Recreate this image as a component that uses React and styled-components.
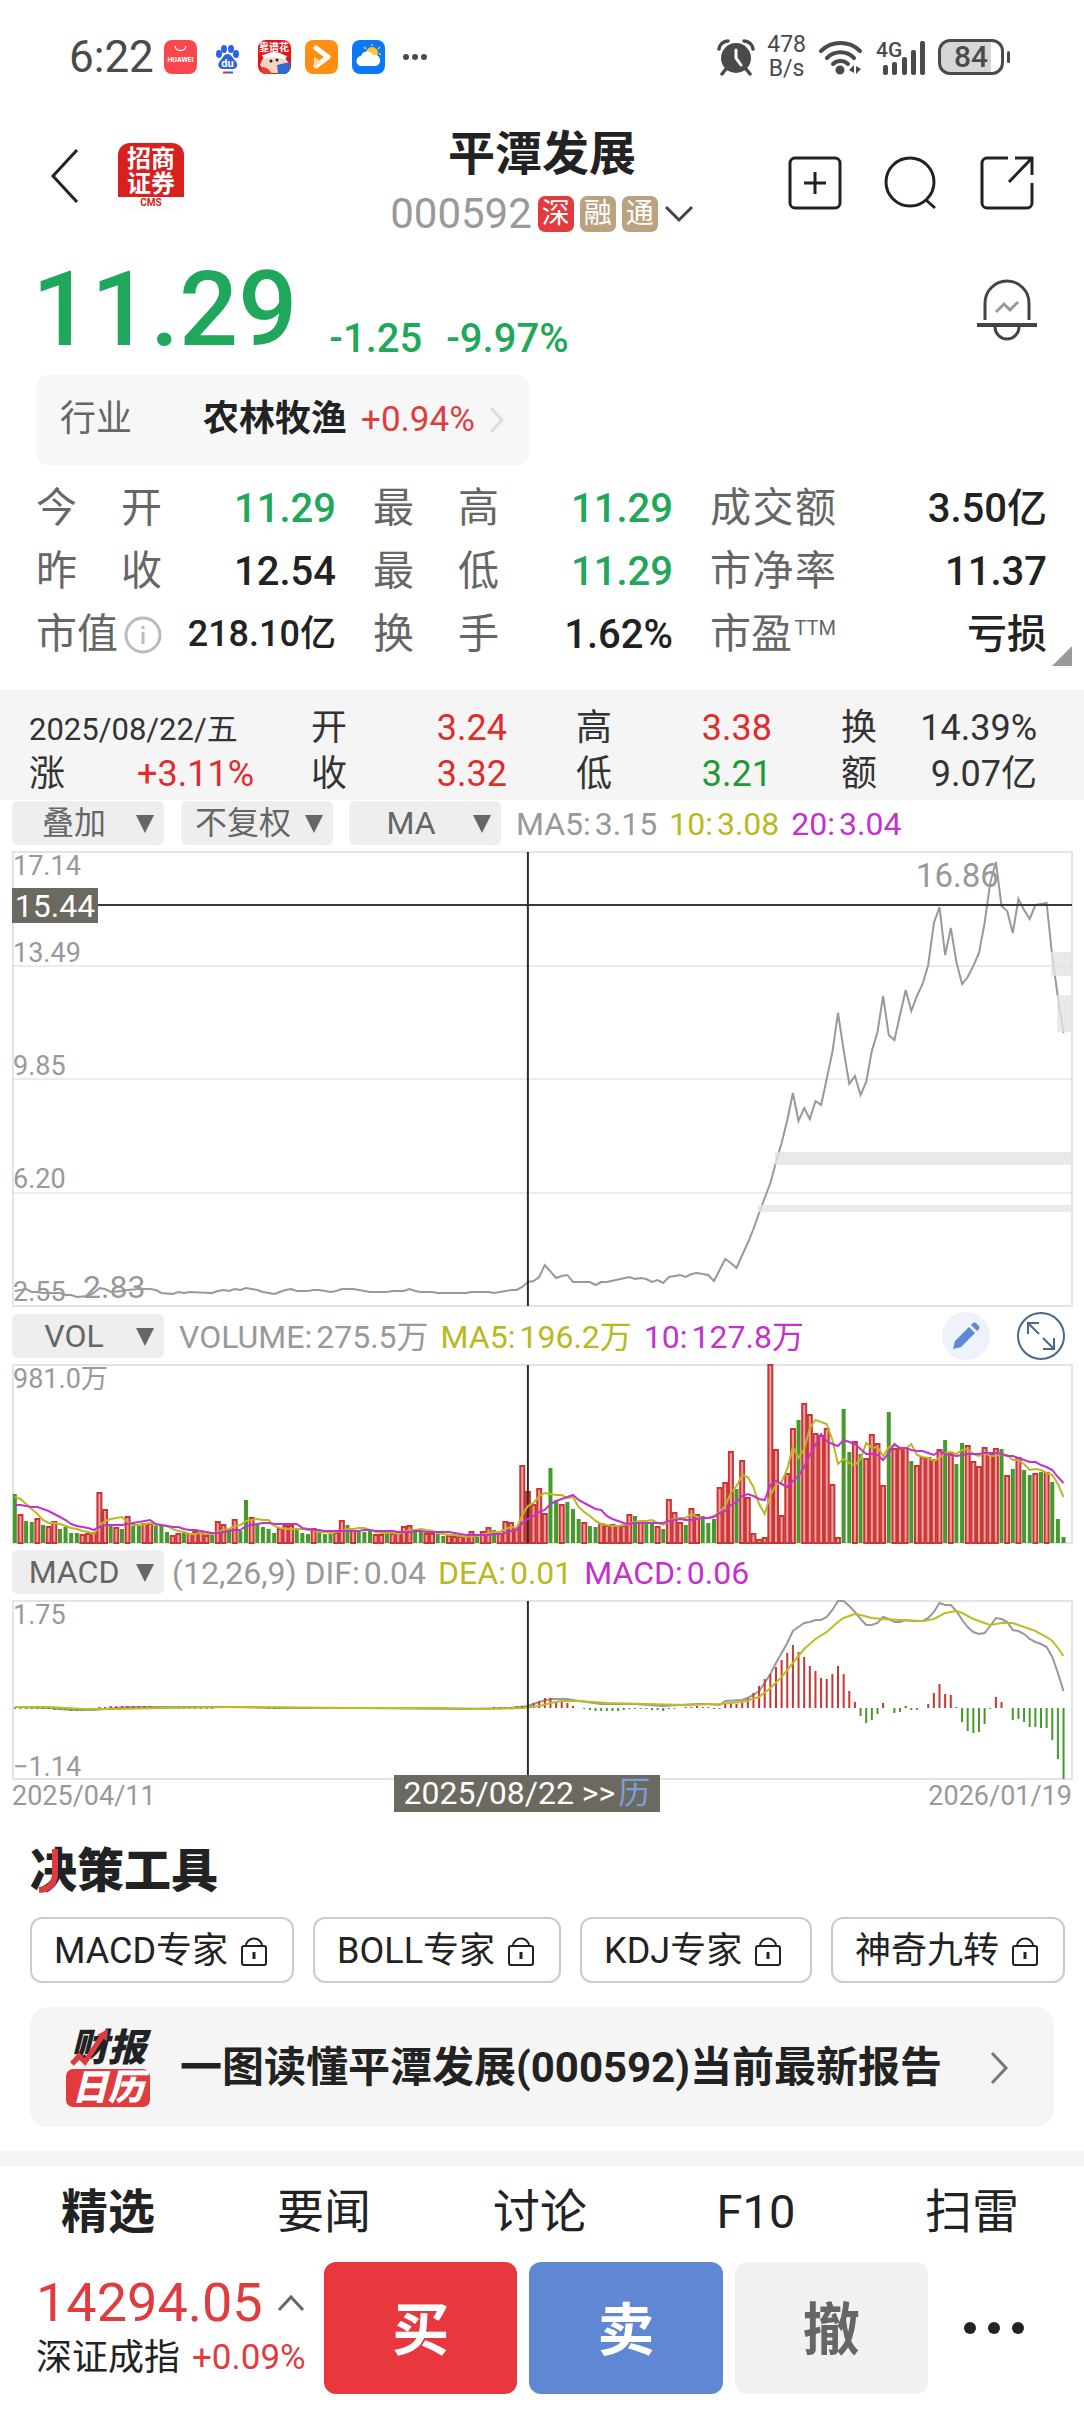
import React from 'react';
import styled, { createGlobalStyle } from 'styled-components';

const GlobalStyle = createGlobalStyle`
  * { box-sizing: border-box; }
  body {
    margin: 0;
    background: #fff;
    color: #222;
    font-family: Roboto, "Noto Sans CJK SC", sans-serif;
    line-height: 1.2;
    overflow-x: hidden;
  }
  button, select {
    font-family: inherit;
    line-height: inherit;
    border: 0;
    padding: 0;
    margin: 0;
    background: none;
    color: inherit;
  }
  a { color: inherit; text-decoration: none; }
  svg { display: block; flex: none; }
  h1, h2, dl, dt, dd, p { margin: 0; font-weight: normal; }
`;

const colors = {
  up: '#e03c40',
  down: '#1fa85b',
  text: '#222',
  label: '#666',
  muted: '#999',
  yellow: '#b9b91e',
  purple: '#c432cc',
  barRed: '#c93636',
  barGreen: '#459a2c',
};

/* ---------- data ---------- */

const quotes = [
  { label: '今开', value: '11.29', color: colors.down },
  { label: '最高', value: '11.29', color: colors.down },
  { label: '成交额', value: '3.50亿' },
  { label: '昨收', value: '12.54' },
  { label: '最低', value: '11.29', color: colors.down },
  { label: '市净率', value: '11.37' },
  { label: '市值', value: '218.10亿', info: true, small: true },
  { label: '换手', value: '1.62%' },
  { label: '市盈', value: '亏损', sup: 'TTM' },
];

const dayRows = [
  [
    ['2025/08/22/五', ''],
    ['开', '3.24', '#e02c2c'],
    ['高', '3.38', '#e02c2c'],
    ['换', '14.39%', '#333'],
  ],
  [
    ['涨', '+3.11%', '#e02c2c'],
    ['收', '3.32', '#e02c2c'],
    ['低', '3.21', '#1f9a30'],
    ['额', '9.07亿', '#333'],
  ],
];

// [bar index, y] for every turning point of the price line
const pricePoints = [
  [0, 439], [2, 437], [3, 440], [4, 440], [5, 441], [8, 441], [9, 443], [10, 443], [11, 445], [13, 444], [14, 441],
  [15, 436], [16, 437], [17, 440], [19, 439], [20, 438], [22, 437], [24, 437], [25, 438], [26, 441], [28, 442],
  [29, 440], [30, 441], [31, 440], [35, 441], [36, 439], [37, 438], [38, 439], [39, 437], [40, 438], [41, 436],
  [42, 437], [43, 438], [44, 440], [46, 442], [47, 440], [48, 438], [49, 437], [50, 439], [52, 439], [53, 438],
  [54, 438], [56, 440], [57, 439], [58, 437], [60, 437], [62, 439], [63, 440], [66, 440], [67, 439], [69, 439],
  [70, 437], [71, 439], [72, 440], [74, 440], [75, 441], [80, 441], [81, 440], [84, 440], [85, 441], [86, 440],
  [88, 438], [89, 438], [90, 435], [91, 430], [92, 429], [93, 425], [94, 413], [96, 426], [97, 424], [98, 423],
  [99, 430], [102, 430], [103, 433], [104, 430], [105, 430], [109, 425], [110, 427], [111, 426], [112, 427],
  [113, 430], [114, 428], [115, 431], [116, 425], [118, 423], [119, 425], [120, 422], [121, 421], [123, 423],
  [124, 429], [125, 418], [126, 407], [127, 411], [128, 416], [129, 403], [130, 391], [131, 377], [132, 361],
  [133, 346], [134, 331], [135, 310], [136, 291], [137, 268], [138, 241], [139, 269], [140, 256], [141, 267],
  [142, 249], [143, 253], [144, 227], [145, 200], [146, 161], [147, 198], [148, 232], [149, 224], [150, 243],
  [151, 230], [152, 199], [153, 180], [154, 144], [155, 183], [156, 188], [157, 163], [158, 138], [159, 159],
  [160, 144], [161, 132], [162, 113], [163, 71], [164, 55], [165, 103], [166, 76], [167, 110], [168, 132],
  [169, 125], [170, 114], [171, 101], [172, 71], [173, 31], [174, 10], [175, 54], [176, 59], [177, 81], [178, 47],
  [179, 58], [180, 67], [181, 53], [182, 52], [183, 51], [184, 105], [185, 145], [186, 181],
];

// volume bars, g = falling day, r = rising day
const volumes = `
g49 r28 g22 g21 r24 g18 r16 r21 g14 g16 g10 g10 r8 r9 r10 r50 r33 g17 r15 g14 r26 g17 g17 r19 r19 g17 g17 g11 r7 r9
g10 r9 r11 r10 r7 g8 r21 r18 g14 r23 g12 g43 r25 g19 g16 g14 g10 r14 r17 r17 g13 g10 g9 r14 g11 g9 g9 r10 r22 g18
r12 g11 g11 g13 r8 r8 g10 r9 r11 r16 r17 g13 g11 r9 r9 g9 g7 r7 r6 r6 r6 r11 g6 r11 r15 g13 r9 r21 r20 r14
r77 r51 r38 r54 r29 g75 g43 r38 g41 g34 g24 r20 g17 g16 r19 r17 r18 r17 r17 r28 g27 r21 g19 g19 r16 g14 r43 r30 r20 g18
r34 r28 g27 g20 g24 r55 r60 r91 g54 r82 r45 r9 r3 r5 r178 r93 r27 r69 r114 g123 r139 r128 r109 r107 r114 r58 r5 g134 g91 r101
g89 r84 r108 r99 r57 g131 r94 r94 r94 g82 r77 r85 r85 r83 r93 g103 r89 g79 g100 r97 r81 r76 r95 r88 r94 g94 r67 g74 r85 g73
g68 r69 g71 r70 g61 g24 g6
`.trim().split(/\s+/).map((s) => ({ rise: s[0] === 'r', h: Number(s.slice(1)) }));

const earlierVolumes = [28, 28, 30, 32, 32, 40, 45, 48, 48];

const macdBars = [
  -1, -1, -1, -1, -1, -1, -1, -2, -2, -2, -3, -3, -3, -2, -1, 1, 1, 2, 2, 2, 2, 2, 2, 2, 2, 1, -1, -1, -1, -1,
  -1, -1, -1, -1, -1, -1, 1, 1, 1, 2, 2, 2, 2, 1, 0, -1, -1, -1, 0, 0, 0, 0, 0, 0, 0, 0, 0, 0, 1, 1,
  1, 1, 1, 1, 0, -1, -1, -1, -1, -1, -1, -1, 0, 0, 0, 0, 0, 0, -1, -1, -1, 0, 0, 0, 0, 1, 1, 1, 1, 2,
  2, 3, 5, 7, 10, 10, 7, 6, 5, 2, 0, -1, -2, -3, -3, -3, -3, -3, -2, -1, -1, -1, -1, -2, -2, -3, -1, -1, 0, 1,
  1, 2, 1, 1, -1, -1, 4, 6, 4, 6, 10, 15, 22, 29, 34, 41, 48, 55, 63, 56, 51, 42, 37, 30, 29, 34, 42, 34, 17, 6,
  -8, -15, -12, -6, 5, 0, -5, -4, 2, -2, -2, 0, 4, 15, 24, 14, 13, 1, -14, -23, -25, -24, -16, -1, 11, 6, 0, -12,
  -11, -14, -19, -19, -20, -20, -32, -51, -71,
];

const difPoints = [
  [0, 106], [6, 107], [10, 109], [14, 109], [20, 106], [28, 106], [38, 106], [46, 107], [60, 107], [80, 108],
  [88, 107], [91, 105], [93, 101], [95, 98], [98, 98], [100, 100], [104, 103], [110, 103], [115, 105], [121, 103],
  [123, 103], [125, 104], [126, 100], [129, 99], [130, 97], [131, 94], [132, 90], [133, 82], [134, 73], [135, 62],
  [136, 52], [137, 42], [138, 30], [139, 26], [140, 22], [141, 21], [142, 19], [143, 19], [144, 16], [145, 9],
  [146, 0], [147, 0], [148, 5], [149, 11], [150, 18], [151, 24], [152, 24], [153, 22], [154, 16], [155, 18],
  [156, 21], [157, 21], [158, 19], [159, 20], [161, 20], [162, 17], [163, 11], [164, 2], [165, 4], [166, 4],
  [167, 10], [168, 19], [169, 26], [170, 31], [171, 33], [172, 32], [173, 25], [174, 17], [175, 18], [176, 21],
  [177, 29], [178, 30], [179, 33], [180, 38], [181, 41], [182, 43], [183, 46], [184, 56], [185, 72], [186, 90],
];

const deaPoints = [
  [0, 106], [6, 106], [12, 108], [18, 108], [26, 107], [40, 106], [60, 107], [75, 107], [84, 108], [90, 107],
  [93, 105], [95, 102], [97, 100], [100, 100], [105, 102], [112, 103], [119, 104], [125, 103], [129, 101],
  [132, 96], [134, 87], [136, 76], [138, 62], [140, 48], [142, 38], [144, 31], [146, 21], [147, 17], [148, 15],
  [149, 13], [150, 14], [152, 17], [154, 18], [157, 19], [161, 20], [163, 18], [165, 12], [167, 10], [168, 12],
  [170, 18], [172, 22], [173, 24], [175, 22], [177, 22], [179, 26], [181, 30], [183, 36], [184, 40], [185, 47],
  [186, 55],
];

const CHART_W = 1060;
const STEP = CHART_W / 188;
const CURSOR = 91;
const barX = (i) => STEP * (i + 0.5);
const toPoints = (list) => list.map(([i, y]) => `${barX(i).toFixed(1)},${y}`).join(' ');

const average = (n) => {
  const all = [...earlierVolumes, ...volumes.map((v) => v.h)];
  return volumes.map((v, i) => {
    const end = i + earlierVolumes.length + 1;
    const sum = all.slice(end - n, end).reduce((a, b) => a + b, 0);
    return [i, Math.round(178 - sum / n)];
  });
};

/* ---------- status bar ---------- */

const StatusBar = styled.div`
  display: flex;
  align-items: center;
  justify-content: space-between;
  height: 112px;
  padding: 2px 74px 0 69px;
  color: #4a4a4a;
`;

const StatusGroup = styled.div`
  display: flex;
  align-items: center;
  gap: ${(p) => p.$gap}px;
`;

const Clock = styled.span`
  font-size: 44px;
  line-height: 48px;
  margin-right: -4px;
`;

const NetSpeed = styled.span`
  font-size: 23px;
  line-height: 24px;
  text-align: center;
`;

const Battery = styled.span`
  display: flex;
  align-items: center;
  gap: 3px;
  &::after {
    content: '';
    width: 3px;
    height: 12px;
    border-radius: 2px;
    background: #4a4a4a;
  }
`;

const BatteryBody = styled.span`
  width: 66px;
  height: 36px;
  border: 3px solid #4a4a4a;
  border-radius: 12px;
  background: linear-gradient(90deg, #d6d6d6 84%, #fff 84%);
  font-size: 30px;
  font-weight: 500;
  line-height: 30px;
  text-align: center;
`;

/* ---------- header ---------- */

const Header = styled.header`
  display: grid;
  grid-template-columns: 1fr auto 1fr;
  align-items: center;
  padding: 12px 50px 0;
  height: 132px;
`;

const HeaderSide = styled.div`
  display: flex;
  align-items: center;
  justify-content: ${(p) => (p.$end ? 'flex-end' : 'flex-start')};
  gap: ${(p) => (p.$end ? 42 : 38)}px;
  padding-bottom: ${(p) => (p.$end ? 2 : 16)}px;
`;

const Broker = styled.a`
  width: 66px;
  height: 66px;
  border-radius: 12px;
  overflow: hidden;
  background: linear-gradient(#d8201f 54px, #fff 54px);
  box-shadow: 0 0 2px #ddd;
  color: #fff;
  font-weight: 700;
  font-size: 24px;
  line-height: 25px;
  text-align: center;
  padding-top: 4px;
`;

const BrokerCode = styled.span`
  display: block;
  color: #d8201f;
  font-size: 10px;
  line-height: 12px;
`;

const TitleBox = styled.div`
  display: flex;
  flex-direction: column;
  align-items: center;
`;

const StockName = styled.h1`
  font-size: 47px;
  line-height: 60px;
  font-weight: 700;
`;

const StockCode = styled.button`
  display: flex;
  align-items: center;
  gap: 6px;
  font-size: 42px;
  line-height: 60px;
  color: ${colors.muted};
`;

const Badge = styled.span`
  width: 36px;
  height: 36px;
  border-radius: 7px;
  background: ${(p) => p.$bg};
  color: #fff;
  font-size: 28px;
  line-height: 36px;
  text-align: center;
`;

const IconButton = styled.button`
  display: flex;
`;

/* ---------- price ---------- */

const PriceRow = styled.section`
  display: flex;
  align-items: center;
  justify-content: space-between;
  height: 131px;
  padding: 0 46px 0 32px;
`;

const PriceGroup = styled.div`
  display: flex;
  align-items: flex-end;
  gap: 24px;
  color: ${colors.down};
  font-size: 40px;
  line-height: 56px;
  font-weight: 500;
`;

const Price = styled.strong`
  font-size: 104px;
  line-height: 114px;
  font-weight: 500;
  margin-right: 8px;
`;

const Industry = styled.a`
  display: inline-flex;
  align-items: center;
  height: 90px;
  margin-left: 36px;
  padding: 0 24px;
  border-radius: 12px;
  background: #f7f7f7;
  font-size: 36px;
  color: ${colors.label};
  b { margin: 0 14px 0 71px; color: #222; font-weight: 700; }
  span { margin-right: 14px; color: ${colors.up}; font-size: 35px; }
`;

const Quotes = styled.dl`
  position: relative;
  display: grid;
  grid-template-columns: 300fr 300fr 337fr;
  column-gap: 37px;
  padding: 12px 37px 24px 36px;
`;

const Quote = styled.div`
  display: flex;
  align-items: center;
  justify-content: space-between;
  height: 63px;
  dt {
    display: flex;
    justify-content: space-between;
    align-items: center;
    width: 126px;
    font-size: 41px;
    color: ${colors.label};
  }
  dd {
    color: ${(p) => p.$color || colors.text};
    font-size: ${(p) => (p.$small ? 36 : 40)}px;
    font-weight: 500;
    white-space: nowrap;
  }
  sup { font-size: 20px; align-self: flex-start; line-height: 36px; vertical-align: top; }
`;

const Corner = styled.span`
  position: absolute;
  right: 12px;
  bottom: 24px;
  border: 10px solid;
  border-color: transparent #999 #999 transparent;
`;

const DayInfo = styled.section`
  border-top: 16px solid #f2f4f6;
  background: #f5f5f5;
  padding: 0 47px 2px 29px;
  color: #333;
`;

const DayRow = styled.div`
  display: grid;
  grid-template-columns: 282fr 265fr 265fr 196fr;
  height: 46px;
  align-items: baseline;
  line-height: 44px;
`;

const DayCell = styled.div`
  display: flex;
  justify-content: space-between;
  align-items: baseline;
  white-space: nowrap;
  padding-right: 69px;
  font-size: ${(p) => (p.$date ? 31 : 36)}px;
  &:first-child { padding-right: 57px; }
  &:last-child { padding-right: 0; }
  b { font-weight: 400; color: ${(p) => p.$color}; }
`;

/* ---------- charts ---------- */

const Charts = styled.section`
  padding: 0 12px;
`;

const Toolbar = styled.div`
  display: flex;
  align-items: center;
  padding: ${(p) => p.$top}px 0 6px;
`;

const SelectBox = styled.label`
  position: relative;
  width: 152px;
  height: 44px;
  margin-right: ${(p) => p.$gap}px;
  color: ${colors.label};
  &::after {
    content: '';
    position: absolute;
    right: 10px;
    top: 14px;
    border: 9px solid transparent;
    border-top: 18px solid #666;
    border-bottom: 0;
    pointer-events: none;
  }
  select {
    appearance: none;
    width: 100%;
    height: 100%;
    padding-right: 28px;
    border-radius: 6px;
    background: #eee;
    font-size: 32px;
    text-align-last: center;
  }
`;

const LegendItem = styled.span`
  display: flex;
  gap: 4px;
  color: ${(p) => p.$color};
  font-size: 32px;
  line-height: 46px;
  margin-right: 12px;
  height: 44px;
  white-space: nowrap;
`;

const Tools = styled.div`
  display: flex;
  gap: 27px;
  height: 44px;
  align-items: center;
  margin: 0 7px 0 auto;
`;

const RoundButton = styled.button`
  display: flex;
  align-items: center;
  justify-content: center;
  width: 48px;
  height: 48px;
  border-radius: 50%;
  background: ${(p) => (p.$outlined ? '#fff' : '#edf2fb')};
  border: ${(p) => (p.$outlined ? '2px solid #46698c' : '0')};
`;

const Plot = styled.svg`
  width: 100%;
  height: auto;
  overflow: visible;
`;

const Axis = styled.div`
  position: relative;
  display: flex;
  justify-content: space-between;
  height: 34px;
  color: ${colors.muted};
  font-size: 27px;
  line-height: 32px;
`;

const CursorDate = styled.button`
  position: absolute;
  left: 36%;
  top: -5px;
  height: 37px;
  padding: 0 10px;
  background: #6b6960;
  color: #fff;
  font-size: 32px;
  line-height: 37px;
  white-space: nowrap;
  span { color: #7a9fd8; margin-left: 3px; }
`;

/* ---------- tools ---------- */

const Heading = styled.h2`
  position: relative;
  margin: 26px 30px 0;
  font-size: 47px;
  line-height: 62px;
  font-weight: 900;
  svg { position: absolute; left: 0; top: 7px; }
`;

const Chips = styled.div`
  display: flex;
  gap: 19px;
  padding: 15px 0 24px 30px;
  overflow: hidden;
`;

const Chip = styled.button`
  flex: none;
  display: flex;
  align-items: center;
  gap: 12px;
  min-width: 232px;
  height: 66px;
  padding: 3px 24px 0 22px;
  border: 2px solid #ccc;
  border-radius: 12px;
  font-size: 36px;
`;

const Report = styled.a`
  display: flex;
  align-items: center;
  height: 120px;
  margin: 0 30px 24px;
  padding: 2px 44px 0 36px;
  border-radius: 18px;
  background: #f5f5f5;
  font-size: 42px;
  font-weight: 700;
  white-space: nowrap;
  p { flex: 1; margin-left: 30px; font-weight: 700; }
`;

const ReportLogo = styled.span`
  position: relative;
  display: flex;
  flex-direction: column;
  gap: 3px;
  width: 84px;
  font-size: 38px;
  font-style: italic;
  font-weight: 900;
  line-height: 36px;
  text-align: center;
  svg { position: absolute; left: 3px; top: -1px; }
`;

const ReportBadge = styled.span`
  border-radius: 7px;
  background: ${colors.up};
  color: #fff;
  font-size: 36px;
  line-height: 38px;
`;

const Tabs = styled.nav`
  display: flex;
  height: 105px;
  padding: 2px 4px 0 0;
  border-top: 15px solid #f2f4f6;
`;

const Tab = styled.button`
  flex: 1;
  font-size: 47px;
  font-weight: ${(p) => (p.$active ? 700 : 400)};
`;

const Footer = styled.footer`
  display: flex;
  align-items: center;
  gap: 12px;
  padding: 6px 0 18px 36px;
`;

const Index = styled.a`
  width: 276px;
  color: ${colors.up};
`;

const IndexLine = styled.div`
  display: flex;
  align-items: center;
  gap: ${(p) => (p.$big ? 14 : 12)}px;
  line-height: ${(p) => (p.$big ? 60 : 50)}px;
  font-size: ${(p) => (p.$big ? 54 : 35)}px;
  white-space: nowrap;
  b { color: #222; font-weight: 400; font-size: 36px; }
`;

const Trade = styled.button`
  flex: 1;
  height: 132px;
  padding-top: 6px;
  border-radius: 12px;
  background: ${(p) => p.$bg};
  color: ${(p) => p.$color || '#fff'};
  font-size: 57px;
  font-weight: 700;
`;

const More = styled.button`
  display: flex;
  justify-content: center;
  gap: 12px;
  width: 144px;
  padding-right: 36px;
  i {
    width: 12px;
    height: 12px;
    border-radius: 50%;
    background: #222;
  }
`;

const Chevron = ({ w, h, d, color, stroke = 3 }) => (
  <svg width={w} height={h} viewBox={`0 0 ${w} ${h}`} fill="none" stroke={color} strokeWidth={stroke}>
    <path d={d} />
  </svg>
);

const Lock = () => (
  <svg width="28" height="32" viewBox="0 0 28 32" fill="none" stroke="#222" strokeWidth="2">
    <rect x="2" y="10" width="24" height="19" rx="2" />
    <path d="M6 10a8 7.500 0 0 1 16 0" />
    <path d="M14 16v7" strokeWidth="3" />
  </svg>
);

const AppIcons = () => (
  <>
    <svg width="33" height="34" viewBox="0 0 33 34">
      <rect width="33" height="34" rx="8" fill="#f9484d" />
      <path d="M11 6c1 6 10 6 11 0" fill="none" stroke="#fff" strokeWidth="1.300" />
      <text x="16.500" y="22" fontSize="7" fontWeight="700" fill="#fff" textAnchor="middle">HUAWEI</text>
    </svg>
    <svg width="33" height="34" viewBox="0 0 33 34" fill="#2d62e8">
      <ellipse cx="8" cy="14" rx="3" ry="4" />
      <ellipse cx="13" cy="9" rx="3" ry="4" />
      <ellipse cx="20" cy="9" rx="3" ry="4" />
      <ellipse cx="25" cy="14" rx="3" ry="4" />
      <path d="M16.500 14c4 0 5 4 8 7s2 8-3 8H12c-5 0-6-5-3-8s3.500-7 7.500-7z" />
      <text x="16.500" y="27" fontSize="11" fontWeight="700" fill="#fff" textAnchor="middle">du</text>
      <path d="M12 31.500h5v2h-5z" fill="#d33" />
      <path d="M17 31.500h5v2h-5z" />
    </svg>
    <svg width="33" height="34" viewBox="0 0 33 34">
      <rect width="33" height="34" rx="8" fill="#e5141b" />
      <path d="M2 25c3-9 8-12 14-11s12 3 15 10l-6 9H8z" fill="#f7d3c2" />
      <path d="M4 15c4 0 6-3 12-3s9 3 13 4l-2 4c-6-3-14-4-21-1z" fill="#fff" />
      <circle cx="13" cy="21" r="1.500" fill="#222" />
      <circle cx="19" cy="20" r="1.500" fill="#222" />
      <path d="M3 27c4 0 8 1 11 7H8c-3 0-5-2-5-7z" fill="#ee3a2e" />
      <path d="M19 25l13-3v8l-4 4h-8z" fill="#2e6bd0" />
      <text x="16" y="11" fontSize="10" fontWeight="700" fill="#fff" textAnchor="middle">靠谱花</text>
    </svg>
    <svg width="33" height="34" viewBox="0 0 33 34">
      <rect width="33" height="34" rx="8" fill="#ff8f12" />
      <path d="M11 8l12 9-12 9" fill="none" stroke="#fff" strokeWidth="5" strokeLinecap="round" strokeLinejoin="round" />
      <path d="M9 17v10l8-5z" fill="#ffd9a3" />
    </svg>
    <svg width="33" height="34" viewBox="0 0 33 34">
      <rect width="33" height="34" rx="8" fill="#0d78f5" />
      <circle cx="20" cy="13" r="6" fill="#fdc52c" />
      <path d="M20 4v2M12 7l2 2M28 7l-2 2M27 14h2" stroke="#fdc52c" strokeWidth="1.500" />
      <path d="M10 26a5 5 0 0 1-1-10 6.500 6.500 0 0 1 12-1 5.500 5.500 0 0 1 3 11z" fill="#fff" />
    </svg>
  </>
);

const Alarm = () => (
  <svg width="38" height="38" viewBox="0 0 38 38" fill="#4a4a4a">
    <circle cx="19" cy="20" r="15" />
    <path d="M2 11a9 9 0 0 1 9-8M36 11a9 9 0 0 0-9-8M9 31l-4 5M29 31l4 5" fill="none" stroke="#4a4a4a" strokeWidth="3.500" strokeLinecap="round" />
    <path d="M19 12v8l5 7" fill="none" stroke="#fff" strokeWidth="3" strokeLinecap="round" />
  </svg>
);

const Wifi = () => (
  <svg width="46" height="36" viewBox="0 0 46 36" fill="none" stroke="#4a4a4a" strokeWidth="4" strokeLinecap="round">
    <path d="M3 12a28 28 0 0 1 39 0M9 19a19 19 0 0 1 27 0M15 25a11 11 0 0 1 15 0" />
    <circle cx="22" cy="31" r="2.500" fill="#4a4a4a" />
    <path d="M36 26v8l-5-3zM38 35v-8l5 3z" fill="#4a4a4a" stroke="none" />
  </svg>
);

const Signal = () => (
  <svg width="50" height="46" viewBox="0 -5 50 46" fill="#4a4a4a">
    <text x="0" y="18" fontSize="21" fontWeight="500">4G</text>
    <rect x="7" y="26" width="5" height="10" rx="2" />
    <rect x="16" y="23" width="5" height="13" rx="2" />
    <rect x="26" y="18" width="5" height="18" rx="2" />
    <rect x="35" y="11" width="5" height="25" rx="2" />
    <rect x="44" y="2" width="5" height="34" rx="2" />
  </svg>
);

const Frame = ({ h, lines = [] }) => (
  <g fill="none" stroke="#e4e4e4" strokeWidth="2">
    <rect x="1" y="0" width={CHART_W - 1} height={h} />
    {lines.map((y) => (
      <path key={y} d={`M0 ${y}H${CHART_W}`} stroke="#d8d8d8" strokeWidth="1" />
    ))}
  </g>
);

const CursorLine = ({ h }) => <path d={`M${barX(CURSOR).toFixed(1)} 0V${h}`} stroke="#2b2b2b" strokeWidth="2" />;

const PriceChart = () => (
  <Plot viewBox="0 -1 1060 456" role="img" aria-label="价格走势">
    <Frame h={454} lines={[114, 227, 341]} />
    <g fill="#999" fontSize="27">
      <text x="1" y="23">17.14</text>
      <text x="1" y="110">13.49</text>
      <text x="1" y="223">9.85</text>
      <text x="1" y="336">6.20</text>
      <text x="1" y="449">2.55</text>
      <text x="71" y="446" fontSize="32">2.83</text>
      <text x="904" y="35" fontSize="33">16.86</text>
    </g>
    <polyline points={toPoints(pricePoints)} fill="none" stroke="#999" strokeWidth="2" />
    <g fill="#e3e3e3" fillOpacity="0.8">
      <rect x="1039" y="100" width="20" height="24" />
      <rect x="1045" y="143" width="14" height="37" />
      <rect x="763" y="300" width="296" height="13" />
      <rect x="746" y="353" width="313" height="7" />
    </g>
    <path d="M86 53H1060" stroke="#3a3a3a" strokeWidth="2" />
    <CursorLine h={454} />
    <rect x="0" y="36" width="86" height="35" fill="#6b6960" />
    <text x="43" y="65" fontSize="32" fill="#fff" textAnchor="middle">15.44</text>
  </Plot>
);

const VolumeChart = () => (
  <Plot viewBox="0 -1 1060 180" role="img" aria-label="成交量">
    <Frame h={178} />
    <text x="1" y="23" fontSize="27" fill="#999">981.0万</text>
    {volumes.map(({ rise, h }, i) =>
      rise ? (
        <rect key={i} x={barX(i) - 2} y={178 - h} width="4" height={h} fill="#f2a0a0" stroke={colors.barRed} strokeWidth="2" />
      ) : (
        <rect key={i} x={barX(i) - 2} y={178 - h} width="4" height={h} fill={colors.barGreen} />
      )
    )}
    <CursorLine h={178} />
    <polyline points={toPoints(average(5))} fill="none" stroke={colors.yellow} strokeWidth="2" />
    <polyline points={toPoints(average(10))} fill="none" stroke={colors.purple} strokeWidth="2" />
  </Plot>
);

const MacdChart = () => (
  <Plot viewBox="0 -1 1060 180" role="img" aria-label="MACD">
    <Frame h={178} />
    <text x="1" y="23" fontSize="27" fill="#999">1.75</text>
    <text x="1" y="175" fontSize="27" fill="#999">−1.14</text>
    <polyline points={toPoints(difPoints)} fill="none" stroke="#999" strokeWidth="2" />
    {macdBars.map((v, i) => (
      <rect
        key={i}
        x={barX(i) - 1}
        y={v > 0 ? 107 - v : 107}
        width="2"
        height={Math.abs(v)}
        fill={v > 0 ? colors.barRed : colors.barGreen}
      />
    ))}
    <polyline points={toPoints(deaPoints)} fill="none" stroke="#bcbc24" strokeWidth="2" />
    <CursorLine h={178} />
  </Plot>
);

const Picker = ({ name, value, gap }) => (
  <SelectBox $gap={gap}>
    <select aria-label={name} defaultValue={value}>
      <option>{value}</option>
    </select>
  </SelectBox>
);

const Legend = ({ name, value, color }) => (
  <LegendItem $color={color}>
    <span>{name}:</span>
    <span>{value}</span>
  </LegendItem>
);

const App = () => {
  return (
    <>
      <GlobalStyle />
      <StatusBar>
        <StatusGroup $gap={14}>
          <Clock>6:22</Clock>
          <AppIcons />
          <svg width="30" height="8" viewBox="0 0 30 8" fill="#4a4a4a">
            <circle cx="7" cy="4" r="3" />
            <circle cx="16" cy="4" r="3" />
            <circle cx="25" cy="4" r="3" />
          </svg>
        </StatusGroup>
        <StatusGroup $gap={12}>
          <Alarm />
          <NetSpeed>478<br />B/s</NetSpeed>
          <Wifi />
          <Signal />
          <Battery><BatteryBody>84</BatteryBody></Battery>
        </StatusGroup>
      </StatusBar>

      <Header>
        <HeaderSide>
          <IconButton aria-label="返回">
            <Chevron w={30} h={54} d="M27 1L3 27l24 26" color="#222" />
          </IconButton>
          <Broker href="#">
            招商<br />证券
            <BrokerCode>CMS</BrokerCode>
          </Broker>
        </HeaderSide>
        <TitleBox>
          <StockName>平潭发展</StockName>
          <StockCode>
            000592
            <Badge $bg="#e23a3e">深</Badge>
            <Badge $bg="#bba37f">融</Badge>
            <Badge $bg="#bba37f">通</Badge>
            <Chevron w={30} h={18} d="M2 2l13 13L28 2" color="#444" />
          </StockCode>
        </TitleBox>
        <HeaderSide $end>
          <IconButton aria-label="添加">
            <svg width="54" height="54" viewBox="0 0 54 54" fill="none" stroke="#222" strokeWidth="3">
              <rect x="2" y="2" width="50" height="50" rx="5" />
              <path d="M27 16v22M16 27h22" />
            </svg>
          </IconButton>
          <IconButton aria-label="搜索">
            <svg width="54" height="54" viewBox="0 0 54 54" fill="none" stroke="#222" strokeWidth="3">
              <circle cx="26" cy="26" r="24" />
              <path d="M42 44l9 8" />
            </svg>
          </IconButton>
          <IconButton aria-label="分享">
            <svg width="54" height="54" viewBox="0 0 54 54" fill="none" stroke="#222" strokeWidth="3">
              <path d="M28 2H7a5 5 0 0 0-5 5v40a5 5 0 0 0 5 5h40a5 5 0 0 0 5-5V27M35 2h17v17M52 2L29 26" />
            </svg>
          </IconButton>
        </HeaderSide>
      </Header>

      <PriceRow>
        <PriceGroup>
          <Price>11.29</Price>
          <span>-1.25</span>
          <span>-9.97%</span>
        </PriceGroup>
        <IconButton aria-label="提醒">
          <svg width="62" height="62" viewBox="0 0 62 62" fill="none" stroke="#444" strokeWidth="3">
            <path d="M9 41V24a22 22 0 0 1 44 0v17" />
            <path d="M1 46h60" strokeWidth="4" />
            <path d="M19 48a12 12 0 0 0 24 0" />
            <path d="M20 33l8-8 6 6 8-8" stroke="#999" />
          </svg>
        </IconButton>
      </PriceRow>

      <Industry href="#">
        行业<b>农林牧渔</b><span>+0.94%</span>
        <Chevron w={16} h={28} d="M2 2l11 12L2 26" color="#ddd" />
      </Industry>

      <Quotes>
        {quotes.map((q) => (
          <Quote key={q.label} $color={q.color} $small={q.small}>
            <dt>
              {q.info || q.sup ? q.label : q.label.split('').map((c) => <span key={c}>{c}</span>)}
              {q.sup && <sup>{q.sup}</sup>}
              {q.info && (
                <svg width="38" height="38" viewBox="0 0 38 38" fill="none" stroke="#bbb" strokeWidth="3">
                  <circle cx="19" cy="19" r="17" />
                  <path d="M19 16v12M19 10v3" />
                </svg>
              )}
            </dt>
            <dd>{q.value}</dd>
          </Quote>
        ))}
        <Corner />
      </Quotes>

      <DayInfo>
        {dayRows.map((row, r) => (
          <DayRow key={r}>
            {row.map(([label, value, color]) => (
              <DayCell key={label} $color={color} $date={!value}>
                <span>{label}</span>
                {value && <b>{value}</b>}
              </DayCell>
            ))}
          </DayRow>
        ))}
      </DayInfo>

      <Charts>
        <Toolbar $top={1}>
          <Picker name="叠加" value="叠加" gap={17} />
          <Picker name="复权" value="不复权" gap={16} />
          <Picker name="均线" value="MA" gap={15} />
          <Legend color={colors.muted} name="MA5" value="3.15" />
          <Legend color={colors.yellow} name="10" value="3.08" />
          <Legend color={colors.purple} name="20" value="3.04" />
        </Toolbar>
        <PriceChart />
        <Toolbar $top={7}>
          <Picker name="成交量指标" value="VOL" gap={15} />
          <Legend color={colors.muted} name="VOLUME" value="275.5万" />
          <Legend color={colors.yellow} name="MA5" value="196.2万" />
          <Legend color={colors.purple} name="10" value="127.8万" />
          <Tools>
            <RoundButton aria-label="画线">
              <svg width="30" height="30" viewBox="0 0 30 30" fill="#5f88d6">
                <path d="M2 28l2-8L18 6l6 6L10 26z" />
                <path d="M20 4l2-2q2-1 3 0l3 3q1 2 0 3l-2 2z" />
              </svg>
            </RoundButton>
            <RoundButton $outlined aria-label="全屏">
              <svg width="30" height="30" viewBox="0 0 30 30" fill="none" stroke="#46698c" strokeWidth="2">
                <path d="M2 13V2h11M2 2l11 11M28 17v11H17M28 28L17 17" />
              </svg>
            </RoundButton>
          </Tools>
        </Toolbar>
        <VolumeChart />
        <Toolbar $top={6}>
          <Picker name="指标" value="MACD" gap={8} />
          <Legend color={colors.muted} name="(12,26,9) DIF" value="0.04" />
          <Legend color={colors.yellow} name="DEA" value="0.01" />
          <Legend color={colors.purple} name="MACD" value="0.06" />
        </Toolbar>
        <MacdChart />
        <Axis>
          <span>2025/04/11</span>
          <CursorDate>2025/08/22 &gt;&gt;<span>历</span></CursorDate>
          <span>2026/01/19</span>
        </Axis>
      </Charts>

      <Heading>
        决策工具
        <svg width="47" height="48" viewBox="0 0 47 48" fill="none" stroke={colors.up} strokeWidth="6">
          <path d="M25 2v24q0 16-16 17" />
        </svg>
      </Heading>
      <Chips>
        {['MACD专家', 'BOLL专家', 'KDJ专家', '神奇九转'].map((name) => (
          <Chip key={name}>
            {name}
            <Lock />
          </Chip>
        ))}
        <Chip aria-label="更多工具" />
      </Chips>
      <Report href="#">
        <ReportLogo>
          财报
          <ReportBadge>日历</ReportBadge>
          <svg width="46" height="42" viewBox="0 0 46 42" fill="none" stroke={colors.up} strokeWidth="5">
            <path d="M3 35l7-8 6 6L34 6" />
            <path d="M28 6l11-6-1 12z" fill={colors.up} stroke="none" />
          </svg>
        </ReportLogo>
        <p>一图读懂平潭发展(000592)当前最新报告</p>
        <Chevron w={20} h={34} d="M2 2l14 15L2 32" color="#777" />
      </Report>

      <Tabs>
        {['精选', '要闻', '讨论', 'F10', '扫雷'].map((name, i) => (
          <Tab key={name} $active={i === 0}>{name}</Tab>
        ))}
      </Tabs>

      <Footer>
        <Index href="#">
          <IndexLine $big>
            <span>14294.05</span>
            <Chevron w={28} h={18} d="M2 16L14 3l12 13" color="#666" />
          </IndexLine>
          <IndexLine>
            <b>深证成指</b>
            <span>+0.09%</span>
          </IndexLine>
        </Index>
        <Trade $bg="#e8383d">买</Trade>
        <Trade $bg="#5f87d3">卖</Trade>
        <Trade $bg="#f1f1f1" $color="#666">撤</Trade>
        <More aria-label="更多"><i /><i /><i /></More>
      </Footer>
    </>
  );
};

export default App;
